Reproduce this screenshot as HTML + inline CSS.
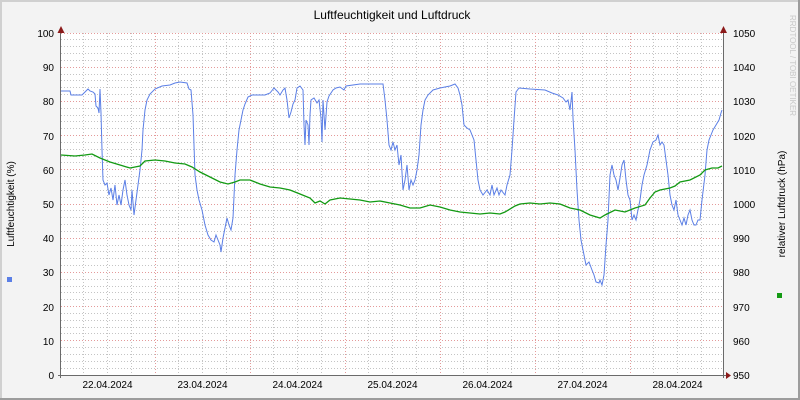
<!DOCTYPE html>
<html><head><meta charset="utf-8"><style>
html,body{margin:0;padding:0;background:#f3f3f3;}
svg{display:block;font-family:"Liberation Sans","DejaVu Sans",sans-serif;}
</style></head><body>
<svg width="800" height="400" xmlns="http://www.w3.org/2000/svg">
<rect x="0" y="0" width="800" height="400" fill="#f3f3f3"/>
<rect x="0" y="0" width="800" height="2" fill="#d0d0d0"/>
<rect x="0" y="0" width="2" height="400" fill="#d0d0d0"/>
<rect x="0" y="398" width="800" height="2" fill="#9c9c9c"/>
<rect x="798" y="0" width="2" height="400" fill="#9c9c9c"/>
<rect x="61" y="33" width="662" height="342" fill="#ffffff"/>
<g id="grid" stroke-width="1" shape-rendering="crispEdges">
<g stroke="#c4c4c4" stroke-dasharray="1,2">
<path d="M61 368.5H723M61 361.5H723M61 354.5H723M61 347.5H723M61 333.5H723M61 327.5H723M61 320.5H723M61 313.5H723M61 299.5H723M61 292.5H723M61 286.5H723M61 279.5H723M61 265.5H723M61 258.5H723M61 251.5H723M61 245.5H723M61 231.5H723M61 224.5H723M61 217.5H723M61 210.5H723M61 197.5H723M61 190.5H723M61 183.5H723M61 176.5H723M61 162.5H723M61 156.5H723M61 149.5H723M61 142.5H723M61 128.5H723M61 121.5H723M61 115.5H723M61 108.5H723M61 94.5H723M61 87.5H723M61 80.5H723M61 74.5H723M61 60.5H723M61 53.5H723M61 46.5H723M61 39.5H723"/>
<path d="M83.5 33V375M107.5 33V375M131.5 33V375M178.5 33V375M202.5 33V375M226.5 33V375M273.5 33V375M297.5 33V375M321.5 33V375M368.5 33V375M392.5 33V375M416.5 33V375M463.5 33V375M487.5 33V375M511.5 33V375M558.5 33V375M582.5 33V375M606.5 33V375M653.5 33V375M677.5 33V375M701.5 33V375"/>
</g>
<g stroke="#e49a9a" stroke-dasharray="1,2">
<path d="M61 340.5H723M61 306.5H723M61 272.5H723M61 238.5H723M61 204.5H723M61 169.5H723M61 135.5H723M61 101.5H723M61 67.5H723M61 33.5H723"/>
<path d="M155.5 33V375M250.5 33V375M345.5 33V375M440.5 33V375M535.5 33V375M630.5 33V375"/>
</g>
</g>
<polyline fill="none" stroke="#5b7fe6" stroke-width="1" points="61,91 70,91 71,95 82,95 85,92 88,89 90,91 93,92 95,94 96,106 98,108 99,113 100,89 101,113 102,150 103,180 105,185 107,183 109,195 111,188 113,200 115,185 117,205 119,195 121,205 123,190 125,180 127,195 129,205 131,210 132,190 134,215 136,200 138,185 140,170 142,150 143,130 145,110 147,100 150,94 155,89 162,86 170,85 175,83 180,82 187,83 189,89 191,90 193,115 195,175 197,190 199,200 202,210 205,225 208,235 211,240 214,242 216,235 218,240 220,245 221,252 223,238 225,228 227,218 229,225 231,230 233,218 235,175 237,150 239,130 241,120 243,110 245,104 248,97 252,95 265,95 270,93 274,88 278,92 280,95 283,90 285,88 287,100 289,118 291,112 293,104 295,100 297,88 300,86 303,90 304,125 305,145 306,120 308,125 309,145 310,115 311,100 314,98 317,103 319,100 321,118 322,142 323,100 325,130 327,102 329,96 333,90 336,88 340,87 344,90 346,86 360,84 383,84 385,100 387,120 389,145 391,150 393,142 395,150 397,145 399,165 401,155 403,190 405,180 407,165 409,190 411,180 413,185 415,180 417,170 419,155 421,125 423,110 425,100 428,95 433,90 440,88 450,86 455,84 458,88 460,95 462,105 464,125 467,128 470,130 474,140 476,160 478,180 480,190 483,195 487,190 490,195 492,185 494,195 497,188 499,195 501,190 505,195 507,185 510,175 512,150 514,120 516,92 519,88 530,89 545,90 552,93 558,95 563,98 566,102 568,100 570,110 572,92 573,118 575,150 577,190 579,220 581,240 583,250 586,265 589,262 592,270 594,275 596,282 599,283 600,280 602,285 604,275 606,245 608,220 610,175 612,165 614,175 616,180 618,190 620,178 622,165 624,160 626,180 628,195 630,200 632,220 634,215 636,220 638,210 640,200 642,185 644,175 647,165 650,150 653,142 656,140 658,135 660,145 662,142 664,145 666,160 668,175 670,195 672,205 674,210 676,200 678,215 680,220 682,225 684,218 686,225 688,215 690,210 692,220 694,225 696,225 698,220 700,220 702,200 705,175 707,150 709,140 711,135 713,130 716,125 719,120 721,113 722,110"/>
<polyline fill="none" stroke="#139a13" stroke-width="1.3" points="61,155 75,156 85,155 92,154 100,158 110,162 120,165 130,168 140,166 145,161 155,160 165,161 175,163 185,164 192,167 200,172 210,177 220,182 228,184 235,182 240,180 250,180 260,184 270,187 280,188 290,190 300,194 310,198 315,203 320,201 325,204 330,200 340,198 350,199 360,200 370,202 380,201 390,203 400,205 410,208 420,208 430,205 440,207 450,210 460,212 470,213 480,214 490,213 500,214 505,212 515,206 520,204 530,203 540,204 550,203 560,204 565,206 570,208 580,210 590,215 600,218 605,215 615,210 625,212 635,208 645,205 650,198 655,192 660,190 670,188 675,186 680,182 690,180 700,175 705,170 712,168 718,168 722,166"/>
<g stroke="#6a6a6a" stroke-width="1" shape-rendering="crispEdges">
<path d="M60.5 30V378M723.5 30V378M58 375.5H726"/>
</g>
<g fill="#8b1a1a">
<path d="M57.5 33L61 26L64.5 33Z"/>
<path d="M720 33L723.5 26L727 33Z"/>
<path d="M726 372L731 375.5L726 379Z"/>
</g>
<g font-size="10" fill="#000">
<g text-anchor="end">
<text x="54" y="379">0</text><text x="54" y="345">10</text><text x="54" y="311">20</text><text x="54" y="276">30</text><text x="54" y="242">40</text><text x="54" y="208">50</text><text x="54" y="174">60</text><text x="54" y="140">70</text><text x="54" y="105">80</text><text x="54" y="71">90</text><text x="54" y="37">100</text>
</g>
<g>
<text x="733" y="379">950</text><text x="733" y="345">960</text><text x="733" y="311">970</text><text x="733" y="276">980</text><text x="733" y="242">990</text><text x="733" y="208">1000</text><text x="733" y="174">1010</text><text x="733" y="140">1020</text><text x="733" y="105">1030</text><text x="733" y="71">1040</text><text x="733" y="37">1050</text>
</g>
<g text-anchor="middle">
<text x="107.5" y="388">22.04.2024</text><text x="202.5" y="388">23.04.2024</text><text x="297.5" y="388">24.04.2024</text><text x="392.5" y="388">25.04.2024</text><text x="487.5" y="388">26.04.2024</text><text x="582.5" y="388">27.04.2024</text><text x="677.5" y="388">28.04.2024</text>
</g>
<text x="392" y="19" font-size="12" text-anchor="middle">Luftfeuchtigkeit und Luftdruck</text>
<text transform="translate(14,204) rotate(-90)" text-anchor="middle">Luftfeuchtigkeit (%)</text>
<text transform="translate(785,204) rotate(-90)" text-anchor="middle">relativer Luftdruck (hPa)</text>
</g>
<text transform="translate(790,15) rotate(90)" font-size="8" fill="#c8c8c8">RRDTOOL / TOBI OETIKER</text>
<rect x="7" y="277" width="5" height="5" fill="#5b7fe6"/>
<rect x="777" y="293" width="5" height="5" fill="#139a13"/>
</svg>
</body></html>
